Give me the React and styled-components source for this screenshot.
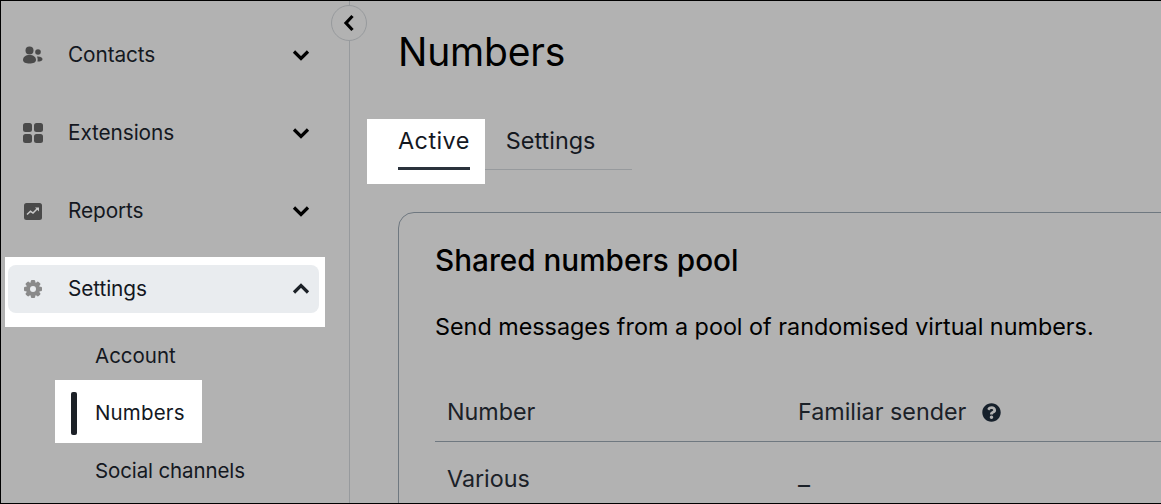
import React from "react";
import styled, { createGlobalStyle } from "styled-components";
import { FaQuestionCircle } from "react-icons/fa";

const Global = createGlobalStyle`
  html, body { margin: 0; padding: 0; height: 100%; overflow: hidden; background: #b2b2b2; }
  body { font-family: "Inter", "Liberation Sans", sans-serif; color: #16181c; }
  * { box-sizing: border-box; }
`;

const Frame = styled.div`
  width: 1161px;
  height: 504px;
  border: solid #000;
  border-width: 1px 0 1px 1px;
  background: #b2b2b2;
  display: flex;
  overflow: hidden;
`;

const Sidebar = styled.nav`
  position: relative;
  flex: 0 0 349px;
  border-right: 1px solid #979a9d;
  padding: 30px 0 0 4px;
`;

const Toggle = styled.button`
  position: absolute;
  top: 4px;
  right: -18px;
  width: 36px;
  height: 36px;
  padding: 0;
  border-radius: 50%;
  border: 1px solid #979a9d;
  background: #b2b2b2;
  display: flex;
  align-items: center;
  justify-content: center;
  color: #000;
`;

const NavItem = styled.div`
  display: flex;
  align-items: center;
  width: 320px;
  height: 48px;
  margin-bottom: 30px;
  padding: 0 14px 0 18px;
`;

const Highlight = styled.div`
  width: 320px;
  margin-top: -8px;
  padding: 8px 5px 14px 3px;
  background: #fff;
`;

const OpenItem = styled.div`
  display: flex;
  align-items: center;
  height: 48px;
  padding: 0 8px 0 15px;
  background: #e9ecef;
  border-radius: 8px;
  width: 311px;
`;

const IconSlot = styled.span`
  flex: 0 0 20px;
  width: 20px;
  height: 20px;
  display: flex;
  align-items: center;
  justify-content: center;
  color: ${p => p.$c || "#4a4a4a"};
  margin-right: 25px;
`;

const Label = styled.span`
  flex: 1;
  font-size: 20.8px;
  line-height: 26px;
  padding-bottom: 1px;
  letter-spacing: -0.1px;
  font-weight: 400;
  color: #14181f;
`;

const Caret = styled.span`
  display: flex;
  color: ${p => p.$c || "#000"};
  margin-right: 1px;
`;

const SubList = styled.div`
  display: flex;
  flex-direction: column;
  align-items: flex-start;
  margin-left: 50px;
`;

const SubItem = styled.div`
  display: flex;
  align-items: center;
  height: ${p => p.$h}px;
  padding-top: ${p => p.$top || 0}px;
  padding-left: 40px;
  font-size: 20.5px;
  letter-spacing: ${p => p.$ls || 0}px;
  color: #14181f;
  position: relative;
`;

const ActiveSubItem = styled(SubItem)`
  background: #fff;
  width: 147px;
`;

const Marker = styled.span`
  position: absolute;
  left: 16px;
  top: 12px;
  width: 6px;
  height: 43px;
  border-radius: 2px;
  background: #1c2127;
`;

const Main = styled.main`
  flex: 1;
  min-width: 0;
  padding: 25px 0 0 48px;
`;

const Title = styled.h1`
  margin: 0;
  height: 93px;
  font-size: 39px;
  line-height: 52px;
  font-weight: 400;
  letter-spacing: -0.2px;
  color: #000;
`;

const Tabs = styled.div`
  display: flex;
  width: 234px;
  height: 51px;
  border-bottom: 1px solid #979a9d;
`;

const Tab = styled.div`
  display: flex;
  align-items: flex-start;
  padding-top: 7px;
  font-size: 23.4px;
  color: #14181f;
  letter-spacing: 0;
`;

const ActiveTab = styled(Tab)`
  position: relative;
  height: 51px;
  margin-right: 36px;
  letter-spacing: 0.45px;
  z-index: 1;
  &::before {
    content: "";
    position: absolute;
    z-index: -1;
    left: -31px;
    right: -15px;
    top: 0;
    height: 65px;
    background: #fff;
  }
  &::after {
    content: "";
    position: absolute;
    left: 0;
    right: 0;
    top: 48px;
    height: 3px;
    background: #2a323c;
  }
`;

const Card = styled.section`
  margin-top: 42px;
  width: 900px;
  height: 320px;
  border: 1px solid #6f7880;
  border-radius: 16px;
  padding: 30px 36px;
`;

const CardTitle = styled.h2`
  margin: 0;
  font-size: 29.7px;
  line-height: 35px;
  font-weight: 500;
  color: #000;
`;

const CardText = styled.p`
  margin: 34px 0 39px;
  font-size: 23.35px;
  line-height: 30px;
  color: #000;
`;

const Row = styled.div`
  display: grid;
  grid-template-columns: 351px 1fr;
  align-items: center;
  padding-left: 12px;
  height: ${p => p.$h}px;
  border-bottom: ${p => (p.$line ? "1px solid #6f7880" : "none")};
  font-size: 23.3px;
  color: #1b2128;
`;

const Help = styled.span`
  display: inline-flex;
  margin-left: 16px;
  vertical-align: -2px;
  font-size: 19px;
  color: #16202b;
`;

const Dash = styled.span`
  padding-top: 14px;
  font-size: 24px;
  line-height: 24px;
`;

function Chevron({ d, w = 18, h = 12 }) {
  return (
    <svg width={w} height={h} viewBox={`0 0 ${w} ${h}`} fill="none" stroke="currentColor" strokeWidth="3.200">
      <path d={d} />
    </svg>
  );
}

function ContactsIcon() {
  return (
    <svg width="20" height="18" viewBox="0 0 20 18" fill="currentColor">
      <circle cx="6.500" cy="4.500" r="4" />
      <path d="M0 14c0-3 2.500-5 6.500-5s6.500 2 6.500 5c0 2.500-3 3.500-6.500 3.500S0 16.500 0 14z" />
      <circle cx="15" cy="6" r="2.800" />
      <path d="M14 10.500c3 0 5.500.800 5.500 2.700 0 1.500-2 2.300-5 2.300.3-2 .2-3.500-.5-5z" />
    </svg>
  );
}

function GridIcon() {
  return (
    <svg width="20" height="20" viewBox="0 0 20 20" fill="currentColor">
      <rect x="0" y="0" width="9" height="9" rx="2.500" />
      <rect x="11" y="0" width="9" height="9" rx="2.500" />
      <rect x="0" y="11" width="9" height="9" rx="2.500" />
      <rect x="11" y="11" width="9" height="9" rx="2.500" />
    </svg>
  );
}

function ChartIcon() {
  return (
    <svg width="18" height="17" viewBox="0 0 18 17">
      <rect width="18" height="17" rx="2.500" fill="currentColor" />
      <path d="M3 11.500l3.500-3.200 2.500 1.700 4.500-4.500" fill="none" stroke="#c9c9c9" strokeWidth="1.500" />
      <path d="M11 4.500h4v4z" fill="#c9c9c9" />
    </svg>
  );
}

function GearIcon() {
  const teeth = [0, 45, 90, 135];
  return (
    <svg width="18" height="18" viewBox="0 0 18 18" fill="currentColor">
      {teeth.map(a => (
        <rect key={a} x="6.800" y="0" width="4.400" height="18" rx="1.200" transform={`rotate(${a} 9 9)`} />
      ))}
      <circle cx="9" cy="9" r="7" />
      <circle cx="9" cy="9" r="3" fill="#e9ecef" />
    </svg>
  );
}

const down = "M2 2.500L9 9.500L16 2.500";
const up = "M2 9.500L9 2.500L16 9.500";

export default function App() {
  return (
    <Frame>
      <Global />
      <Sidebar>
        <Toggle aria-label="Collapse"><Chevron d="M9.500 2L3 9L9.500 16" w={12} h={18} /></Toggle>
        <NavItem>
          <IconSlot><ContactsIcon /></IconSlot>
          <Label>Contacts</Label>
          <Caret><Chevron d={down} /></Caret>
        </NavItem>
        <NavItem>
          <IconSlot><GridIcon /></IconSlot>
          <Label>Extensions</Label>
          <Caret><Chevron d={down} /></Caret>
        </NavItem>
        <NavItem>
          <IconSlot><ChartIcon /></IconSlot>
          <Label>Reports</Label>
          <Caret><Chevron d={down} /></Caret>
        </NavItem>
        <Highlight>
          <OpenItem>
            <IconSlot $c="#8a8a8a"><GearIcon /></IconSlot>
            <Label>Settings</Label>
            <Caret $c="#1c2127"><Chevron d={up} /></Caret>
          </OpenItem>
        </Highlight>
        <SubList>
          <SubItem $h={53} $top={4}>Account</SubItem>
          <ActiveSubItem $h={63} $top={2} $ls={0.15}><Marker />Numbers</ActiveSubItem>
          <SubItem $h={54} $ls={-0.12}>Social channels</SubItem>
        </SubList>
      </Sidebar>
      <Main>
        <Title>Numbers</Title>
        <Tabs>
          <ActiveTab>Active</ActiveTab>
          <Tab>Settings</Tab>
        </Tabs>
        <Card>
          <CardTitle>Shared numbers pool</CardTitle>
          <CardText>Send messages from a pool of randomised virtual numbers.</CardText>
          <Row $h={61} $line>
            <span>Number</span>
            <span>Familiar sender<Help><FaQuestionCircle /></Help></span>
          </Row>
          <Row $h={72}>
            <span>Various</span>
            <Dash>–</Dash>
          </Row>
        </Card>
      </Main>
    </Frame>
  );
}
